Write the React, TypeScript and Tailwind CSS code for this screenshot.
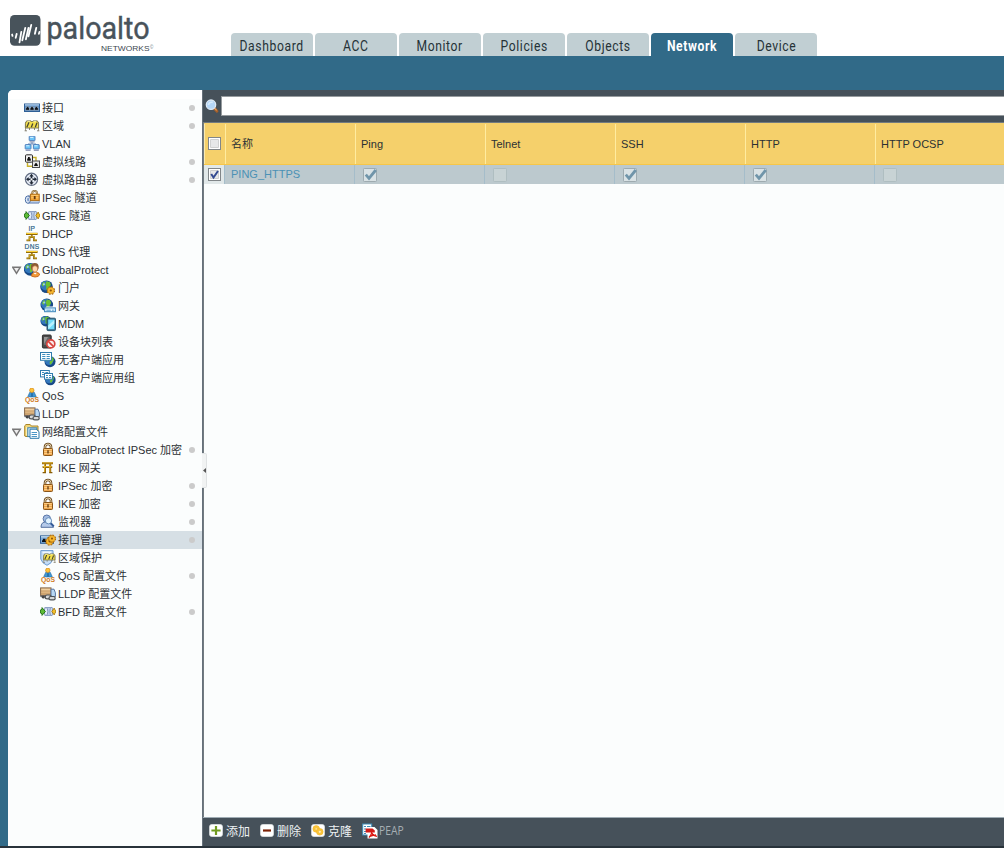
import React from "react";

type IconName =
  | "iface" | "zone" | "vlan" | "vwire" | "router" | "tunnel" | "gre" | "dhcp" | "dns"
  | "gp" | "portal" | "gateway" | "mdm" | "block" | "app" | "appgroup" | "qos" | "lldp"
  | "profiles" | "lock" | "torii" | "monitor" | "mgmt" | "zoneprot";

type Item = { label: string; icon: IconName; dot?: boolean; level?: number; open?: boolean; selected?: boolean };

const items: Item[] = [
  { label: "接口", icon: "iface", dot: true },
  { label: "区域", icon: "zone", dot: true },
  { label: "VLAN", icon: "vlan" },
  { label: "虚拟线路", icon: "vwire", dot: true },
  { label: "虚拟路由器", icon: "router", dot: true },
  { label: "IPSec 隧道", icon: "tunnel" },
  { label: "GRE 隧道", icon: "gre" },
  { label: "DHCP", icon: "dhcp" },
  { label: "DNS 代理", icon: "dns" },
  { label: "GlobalProtect", icon: "gp", open: true },
  { label: "门户", icon: "portal", level: 1 },
  { label: "网关", icon: "gateway", level: 1 },
  { label: "MDM", icon: "mdm", level: 1 },
  { label: "设备块列表", icon: "block", level: 1 },
  { label: "无客户端应用", icon: "app", level: 1 },
  { label: "无客户端应用组", icon: "appgroup", level: 1 },
  { label: "QoS", icon: "qos" },
  { label: "LLDP", icon: "lldp" },
  { label: "网络配置文件", icon: "profiles", open: true },
  { label: "GlobalProtect IPSec 加密", icon: "lock", dot: true, level: 1 },
  { label: "IKE 网关", icon: "torii", level: 1 },
  { label: "IPSec 加密", icon: "lock", dot: true, level: 1 },
  { label: "IKE 加密", icon: "lock", dot: true, level: 1 },
  { label: "监视器", icon: "monitor", dot: true, level: 1 },
  { label: "接口管理", icon: "mgmt", dot: true, level: 1, selected: true },
  { label: "区域保护", icon: "zoneprot", level: 1 },
  { label: "QoS 配置文件", icon: "qos", dot: true, level: 1 },
  { label: "LLDP 配置文件", icon: "lldp", level: 1 },
  { label: "BFD 配置文件", icon: "gre", dot: true, level: 1 },
];

const Globe = ({ cx, cy, r }: { cx: number; cy: number; r: number }) => (
  <g transform={`translate(${cx} ${cy}) scale(${r / 6})`}>
    <circle r="6.4" fill="#174986" />
    <circle cx="-1" cy="-1" r="4.9" fill="#3377bd" />
    <path d="M-5 -2L-3 -5L-1.5 -4L-2 -2L-3.5 0ZM0 -5.6L3.4 -4.8L4.4 -2L2.6 1L1 3.5L-.6 2L0 0L-1.2 -2Z" fill="#6cc132" />
    <circle cx="-2.6" cy="-2.4" r="1.1" fill="#9ccff5" />
  </g>
);

const Gear = ({ cx, cy, s = 1 }: { cx: number; cy: number; s?: number }) => (
  <g transform={`translate(${cx} ${cy}) scale(${s})`}>
    <circle r="4" fill="none" stroke="#a9690c" strokeWidth="2.2" strokeDasharray="1.9 1.24" />
    <circle r="3.9" fill="#f8b930" stroke="#c07d12" strokeWidth=".6" />
    <circle r="1.3" fill="#8e5408" />
  </g>
);

const Padlock = () => (
  <>
    <path d="M5 7V4.8A3 2.8 0 0 1 11 4.8V7" fill="none" stroke="#6d4c22" strokeWidth="2.6" />
    <path d="M5 7V4.8A3 2.8 0 0 1 11 4.8V7" fill="none" stroke="#ead9b4" strokeWidth="1" />
    <rect x="3.5" y="6.5" width="9" height="7" rx=".8" fill="#eda349" stroke="#8a5517" />
    <path d="M4.2 7.6H11.8M4.2 9.6H11.8M4.2 11.6H11.8" stroke="#ffd591" strokeWidth=".9" />
    <path d="M8 8.3V11.4" stroke="#5f360a" strokeWidth="1.3" />
  </>
);

const Barrier = () => (
  <>
    <path d="M1.5 4V13M14.5 4V13" stroke="#a09c8c" />
    <path d="M5.5 10V12M10.5 10V12M.6 12.8H3M13 12.8H15.4" stroke="#8b8778" />
    <path d="M2.6 2.9H7L8 4L9 2.9H13.4L14.6 5.5V10H1.4V5.5Z" fill="#f3df4c" stroke="#77724d" strokeWidth=".9" />
    <path d="M2.8 9.3L5 4.2M7.3 9.3L8.8 5.5M11.3 9.3L13 4.8" stroke="#454433" strokeWidth="1.3" />
    <path d="M3.4 3.6H6M9.6 3.6H12" stroke="#fff7b0" strokeWidth=".8" />
  </>
);

const Monitor = ({ x, y }: { x: number; y: number }) => (
  <g transform={`translate(${x} ${y})`}>
    <rect x=".4" y=".4" width="5.8" height="4.4" rx=".4" fill="#6cc4f7" stroke="#4b78b8" strokeWidth=".9" />
    <path d="M1.4 1.6H4.5" stroke="#dcf5ff" />
    <path d="M.8 6.1H5.8" stroke="#8c95b4" strokeWidth="1.2" />
  </g>
);

const Proxy = () => (
  <>
    <path d="M2 7.9H13.6" stroke="#8f6a08" strokeWidth="2.2" />
    <path d="M2.2 7.5H13.4" stroke="#ffd43a" strokeWidth="1" />
    <path d="M7.8 9V11" stroke="#a97f12" strokeWidth="1.8" />
    <path d="M2.5 14.4H5.5V11.2H10V14.4H13" fill="none" stroke="#83600a" strokeWidth="1.8" />
    <path d="M2.7 14.1H5.3V10.9H10.2V14.1H12.8" fill="none" stroke="#efc533" strokeWidth=".7" />
  </>
);

function icon(name: IconName): React.ReactNode {
  switch (name) {
    case "iface":
      return (
        <>
          <rect x=".5" y="4" width="15" height="7.5" fill="#5d90c6" stroke="#2d5f96" />
          <path d="M1 4.9H15" stroke="#c9e0f4" />
          <path d="M1.6 10.2V8H2.4V6.6H4.8V8H5.6V10.2ZM6 10.2V8H6.8V6.6H9.2V8H10V10.2ZM10.4 10.2V8H11.2V6.6H13.6V8H14.4V10.2Z" fill="#0b1119" stroke="#dce9f5" strokeWidth=".4" />
        </>
      );
    case "zone":
      return <Barrier />;
    case "vlan":
      return (
        <>
          <path d="M8 6V8M4 10V8H12V10" fill="none" stroke="#6a86b5" />
          <Monitor x={4.8} y={-0.2} /><Monitor x={0.8} y={8.2} /><Monitor x={9} y={8.2} />
        </>
      );
    case "vwire":
      return (
        <>
          <path d="M3.5 8.5V12.3H9M9 3.5H12V8" fill="none" stroke="#c9b22c" strokeWidth="1.4" />
          <rect x="1.5" y=".8" width="7" height="7.4" rx="1" fill="#eee" stroke="#2b2b2b" />
          <path d="M3.2 6.8V4.4H4V3H5.8V4.4H6.8V6.8Z" fill="#111" />
          <rect x="8.5" y="7" width="7" height="6.5" fill="#e5e5e5" stroke="#4a4a4a" />
          <path d="M10.2 12V10.4H11V9.2H13V10.4H13.8V12Z" fill="#111" />
        </>
      );
    case "router":
      return (
        <>
          <circle cx="7.5" cy="7.3" r="6.1" fill="#e6ecf6" stroke="#626d82" strokeWidth="1.2" />
          <path d="M7.5 1.8L9.7 4.4H8.3V6.5H10.4V5.1L13 7.3L10.4 9.5V8.1H8.3V10.2H9.7L7.5 12.8L5.3 10.2H6.7V8.1H4.6V9.5L2 7.3L4.6 5.1V6.5H6.7V4.4H5.3Z" fill="#202936" />
          <circle cx="7.5" cy="7.3" r="1.1" fill="#fff" />
        </>
      );
    case "tunnel":
      return (
        <>
          <path d="M4 6H15V13H4Z" fill="#8fb2e2" stroke="#5673a5" />
          <path d="M5 11.8H15" stroke="#d7e5f7" />
          <ellipse cx="3.9" cy="9.6" rx="2.6" ry="3.7" fill="#e3edf9" stroke="#4c70a7" />
          <ellipse cx="4.1" cy="9.6" rx="1" ry="2" fill="#7d9bc8" />
          <path d="M8.2 4.6V3.3A2.4 2.4 0 0 1 13 3.3V4.6" fill="none" stroke="#84632f" strokeWidth="2" />
          <path d="M8.2 4.6V3.3A2.4 2.4 0 0 1 13 3.3V4.6" fill="none" stroke="#ead9b4" strokeWidth=".7" />
          <rect x="6.4" y="4.2" width="8.8" height="6.4" fill="#f2a335" stroke="#b06f19" />
          <path d="M7.2 5.6H14.4M7.2 7.8H14.4" stroke="#ffd57f" strokeWidth=".8" />
          <path d="M10.7 6V9.2" stroke="#653a0d" strokeWidth="1.8" />
        </>
      );
    case "gre":
      return (
        <>
          <rect x="5" y="3.5" width="7" height="8" fill="#b9cbe8" stroke="#7d92bd" strokeWidth=".8" />
          <ellipse cx="6" cy="7.5" rx="1.8" ry="4" fill="#e3ecf9" stroke="#7186b2" strokeWidth=".8" />
          <ellipse cx="11.4" cy="7.5" rx="1.5" ry="4" fill="#cddcf0" stroke="#7185ad" strokeWidth=".7" />
          <path d="M.4 6L2 5.2V3.6L5.4 7.5L2 11.4V9.8L.4 9Z" fill="#5dbb36" stroke="#1d6c15" strokeWidth=".9" />
          <path d="M15.7 6.2L14.3 5.4V4L11.8 7.5L14.3 11V9.6L15.7 8.8Z" fill="#f2c02a" stroke="#9f7209" strokeWidth=".8" />
        </>
      );
    case "dhcp":
      return <><text x="4.4" y="5" fontSize="6.6" fill="#2b6287" stroke="#2b6287" strokeWidth=".2" fontFamily="Liberation Sans" textLength="6.5">IP</text><Proxy /></>;
    case "dns":
      return <><text x=".6" y="5" fontSize="6.6" fill="#2b6287" stroke="#2b6287" strokeWidth=".2" fontFamily="Liberation Sans" textLength="14.6">DNS</text><Proxy /></>;
    case "gp":
      return (
        <>
          <Globe cx={6.3} cy={7.3} r={6} />
          <path d="M7.6 14.2Q7.4 10.3 11.5 10.3T15.7 12.8Q14.5 15 11 15Z" fill="#f29a37" stroke="#c46317" strokeWidth=".9" />
          <circle cx="10.8" cy="5" r="3.9" fill="#8b5a34" />
          <ellipse cx="11" cy="6.9" rx="2.7" ry="3.1" fill="#ffd7ac" stroke="#b46b35" strokeWidth=".6" />
          <path d="M9.2 10.8L11.2 12.6L13 10.8" fill="#fff" />
        </>
      );
    case "portal":
      return <><Globe cx={6.5} cy={6.7} r={5.9} /><Gear cx={10.8} cy={10.5} s={0.85} /></>;
    case "gateway":
      return (
        <>
          <Globe cx={6.8} cy={6.9} r={5.9} />
          <path d="M4.5 10.5L6.5 8.6H13.5L15.5 10.5V14H4.5Z" fill="#fff" />
          <rect x="4.6" y="9.9" width="10.8" height="3.8" fill="#d9f0ff" stroke="#3a84ba" />
          <path d="M6.4 12.2H10.8M12 12.2H13.8" stroke="#5b9fca" />
        </>
      );
    case "mdm":
      return (
        <>
          <Globe cx={5.8} cy={5.1} r={5} />
          <rect x="7" y="2.2" width="8.5" height="12.4" rx="1" fill="#3b6f8c" stroke="#1a4b66" strokeWidth=".9" />
          <rect x="8.2" y="3.6" width="6.1" height="9.6" fill="#70dcfa" />
          <path d="M8.2 13.2V9.6L14.3 4V7.6Z" fill="#b8f2ff" />
        </>
      );
    case "block":
      return (
        <>
          <rect x="2.4" y="1" width="8.8" height="13" rx="1" fill="#4b4b4b" stroke="#303030" />
          <path d="M4 3H9.6V11H4Z" fill="#686868" />
          <path d="M4 10V3H8Z" fill="#969696" />
          <circle cx="10.8" cy="9.9" r="4" fill="#fbeceb" stroke="#d8453f" strokeWidth="1.7" />
          <path d="M8 7.2L13.6 12.6" stroke="#d8453f" strokeWidth="1.7" />
        </>
      );
    case "app":
      return (
        <>
          <Globe cx={10} cy={9.6} r={5.2} />
          <rect x=".5" y=".5" width="11" height="7.8" fill="#fff" stroke="#2f7cad" />
          <path d="M2.2 2.5H5.4M6.6 2.5H9.8M2.2 4.5H5.4M6.6 4.5H9.8M2.2 6.5H5.4M6.6 6.5H9.8" stroke="#3d8fbf" />
        </>
      );
    case "appgroup":
      return (
        <>
          <Globe cx={10.3} cy={10} r={5} />
          <rect x=".5" y=".5" width="8.8" height="6.4" fill="#fff" stroke="#2f7cad" />
          <path d="M2 2.5H4.3M5.4 2.5H8M2 4.5H4.3M5.4 4.5H8" stroke="#3d8fbf" />
          <rect x="4.5" y="3.5" width="8" height="5.7" fill="#fff" stroke="#2f7cad" />
          <path d="M6 5.5H8M9 5.5H11.2M6 7.5H8M9 7.5H11.2" stroke="#3d8fbf" />
        </>
      );
    case "qos":
      return (
        <>
          <path d="M5.8 4.2H10.2L12.4 9H3.6Z" fill="#3f97d3" stroke="#20659d" strokeWidth=".6" />
          <circle cx="7.8" cy="2.3" r="2.2" fill="#ffc53c" stroke="#d68816" strokeWidth=".7" />
          <path d="M8 5.2V8.6" stroke="#154f87" />
          <text x="1" y="14.4" fontSize="6.9" fontWeight="bold" fill="#d07a22" stroke="#fff" strokeWidth=".6" paintOrder="stroke" fontFamily="Liberation Sans" textLength="14" lengthAdjust="spacingAndGlyphs">QoS</text>
        </>
      );
    case "lldp":
      return (
        <>
          <rect x=".6" y="1.9" width="10.4" height="7.6" fill="#cda471" stroke="#86684a" />
          <path d="M1.2 3.5H10.4" stroke="#f0d0a0" strokeWidth="1.6" />
          <path d="M1.2 6.2H10.4" stroke="#e5bd88" />
          <path d="M.3 10.3H10" stroke="#666b72" strokeWidth="1.6" />
          <path d="M11 3.2H14L15.4 6.8V10.6H11Z" fill="#b9d8f4" stroke="#5775a0" />
          <circle cx="3.3" cy="11.2" r="1.4" fill="#444" />
          <g fill="#d6d7d8" stroke="#4e5256" strokeWidth="1.2">
            <rect x="5.2" y="9" width="6" height="3.8" rx="1.9" /><rect x="9" y="10.5" width="6.2" height="3.4" rx="1.7" />
          </g>
        </>
      );
    case "profiles":
      return (
        <>
          <path d="M.7 12V1.8L2 .5H6.2L7.4 2H14V12.5H2Z" fill="#f0d578" stroke="#ab8526" />
          <path d="M2.6 3V11.5" stroke="#fff2b6" />
          <rect x="3.8" y="3.8" width="9" height="8.8" fill="#dceefb" stroke="#3a83b3" />
          <path d="M6 5.2H12.2L15 7.6V14.3H6Z" fill="#fff" stroke="#2b78ab" />
          <path d="M7.6 8.5H13M7.6 10.5H13M7.6 12.5H13" stroke="#4d98c7" />
        </>
      );
    case "lock":
      return <Padlock />;
    case "torii":
      return (
        <>
          <path d="M2 3.3H13M2.6 7H12.2M5 4V12.5M10.2 4V12.5" stroke="#8b6009" strokeWidth="2" />
          <path d="M2.3 2.9H12.7M3 6.6H11.8M4.7 4V12.2M9.9 4V12.2" stroke="#f1bf31" strokeWidth=".9" />
          <path d="M2.6 12.6H6M9.2 12.6H12.4" stroke="#865b08" strokeWidth="1.4" />
        </>
      );
    case "monitor":
      return (
        <>
          <path d="M1 13.3Q1 7.8 6.3 7.8T13.5 13.3Z" fill="#b5caea" stroke="#54719f" />
          <circle cx="6.8" cy="4.7" r="3.7" fill="#a3bce2" stroke="#5a77a8" />
          <circle cx="8.5" cy="6.8" r="3.1" fill="#e2f3ff" stroke="#628ab9" />
          <path d="M10.7 9.2L13.8 12.4" stroke="#335b99" strokeWidth="2" />
        </>
      );
    case "mgmt":
      return (
        <>
          <rect x=".5" y="3.9" width="13" height="7.4" fill="#7fabd6" stroke="#2d5f96" />
          <path d="M1 4.8H10" stroke="#d5e8f6" />
          <path d="M2 10V8.2H2.9V6.8H5.4V8.2H6.3V10Z" fill="#0b1119" />
          <Gear cx={9.6} cy={9.3} s={0.86} /><Gear cx={12} cy={6.6} s={0.8} />
        </>
      );
    case "zoneprot":
      return (
        <>
          <path d="M.8 .6H13V9Q12 13.3 7 15.3Q2 13.3 .8 9Z" fill="#c5ddf7" stroke="#6d9bd2" />
          <path d="M2.6 2.4H11" stroke="#eff7ff" strokeWidth="1.6" />
          <g transform="translate(2.4 1.4) scale(.86)"><Barrier /></g>
        </>
      );
  }
}

const Icon = ({ name }: { name: IconName }) => (
  <svg className="size-4 shrink-0" viewBox="0 0 16 16">{icon(name)}</svg>
);

function TreeRow({ item }: { item: Item }) {
  return (
    <li className={`flex h-[18px] items-center pr-[7px] ${item.level ? "pl-8" : "pl-1"} ${item.selected ? "bg-[#d6dfe5]" : ""}`}>
      {!item.level && (
        <span className="flex w-3 shrink-0 items-center">
          {item.open && (
            <svg className="h-[9px] w-[10px]" viewBox="0 0 10 9">
              <path d="M.8 1.3H8.2L4.5 7.3Z" fill="#eee" stroke="#777" strokeWidth="1.5" />
            </svg>
          )}
        </span>
      )}
      <Icon name={item.icon} />
      <span className="ml-0.5 whitespace-nowrap leading-[18px]">{item.label}</span>
      {item.dot && <i className="ml-auto size-1.5 shrink-0 rounded-full bg-[#cbcbcb]" />}
    </li>
  );
}

const tabs = ["Dashboard", "ACC", "Monitor", "Policies", "Objects", "Network", "Device"];

function Logo() {
  return (
    <svg className="mt-[10px] ml-[10px] h-[46px] w-[150px] shrink-0" viewBox="10 10 150 46">
      <rect x="10" y="15" width="30.5" height="30.8" rx="4.5" fill="#48535b" />
      <path d="M12.4 34.2L12.8 35.6M17 33.5L16 37.5M21.6 31.5L19.8 42M25.6 27.5L22.6 40M28.8 27.5L26.2 39M31.6 24.5L28.8 36M36.6 27.5L35.2 33.5M39.8 31.5L39.2 33.5" transform="translate(-.3 .3)" fill="none" stroke="#fff" strokeWidth="1.8" strokeLinecap="round" />
      <text x="46.5" y="39" fontSize="32" fontFamily="Roboto, sans-serif" fill="#48535b" stroke="#48535b" strokeWidth=".45" textLength="103" lengthAdjust="spacingAndGlyphs">paloalto</text>
      <text x="101" y="51" fontSize="7.7" fontFamily="Liberation Sans, Arial, sans-serif" fill="#3c474f" textLength="48.5" lengthAdjust="spacingAndGlyphs">NETWORKS</text>
      <text x="150" y="49" fontSize="4.5" fontFamily="Liberation Sans, Arial, sans-serif" fill="#68737a">©</text>
    </svg>
  );
}

function HeaderCheckbox({ checked = false }: { checked?: boolean }) {
  return (
    <svg className="size-[13px]" viewBox="0 0 13 13">
      <rect x=".5" y=".5" width="12" height="12" fill="#fff" stroke="#818689" />
      <path d="M2.5 2.5H10.5V10.5H2.5Z" fill="#e7e8e9" stroke="#d0d1d1" />
      {checked && <path d="M3.2 6L5.5 9.5L10 3" fill="none" stroke="#354b91" strokeWidth="2" />}
    </svg>
  );
}

function CellCheckbox({ checked }: { checked: boolean }) {
  return (
    <svg className="size-[15px]" viewBox="0 0 15 15">
      <rect x="1.5" y="1.5" width="13" height="13" rx=".8" fill={checked ? "#d9e2e5" : "#c8d3d5"} stroke={checked ? "#9eabb0" : "#afbec1"} />
      {checked && <path d="M3.8 7.6L7 11.3L13.8 3" fill="none" stroke="#7095aa" strokeWidth="2.8" />}
    </svg>
  );
}

const columns = [
  { label: "名称", checked: null },
  { label: "Ping", checked: true },
  { label: "Telnet", checked: false },
  { label: "SSH", checked: true },
  { label: "HTTP", checked: true },
  { label: "HTTP OCSP", checked: false },
];

function Table() {
  return (
    <div className="overflow-hidden">
      <div className="flex h-[42px] border-b border-[#f7c647] bg-[#f5d06b] pt-px">
        <div className="flex w-[21px] shrink-0 items-center border-l border-[#faeaaf] pb-px pl-[3px]"><HeaderCheckbox /></div>
        {columns.map((col) => (
          <div key={col.label} className="flex w-[130px] shrink-0 items-center border-l border-[#ffec9f] pl-[5px]">{col.label}</div>
        ))}
      </div>
      <div className="flex h-[19px] bg-[#bcc9ce]">
        <div className="flex w-5 shrink-0 items-center bg-[#e1e8e9] pl-1"><HeaderCheckbox checked /></div>
        {columns.map((col) => (
          <div key={col.label} className="flex w-[130px] shrink-0 items-center border-l border-[#a5bdca] pl-[6px] text-[#4b91b5]">
            {col.checked === null ? <span>PING_HTTPS</span> : <span className="pl-px"><CellCheckbox checked={col.checked} /></span>}
          </div>
        ))}
      </div>
    </div>
  );
}

function SearchIcon() {
  return (
    <svg className="size-4 shrink-0" viewBox="0 0 16 16">
      <path d="M10.5 10.5L13 13.2" stroke="#a5602a" strokeWidth="2.8" strokeLinecap="round" />
      <path d="M10.6 10.2L12.6 12.4" stroke="#e3a166" strokeWidth="1.2" />
      <circle cx="7" cy="6.7" r="4.7" fill="#b3d6f8" stroke="#dce9f5" strokeWidth="1.3" />
      <path d="M4.4 7Q5.2 3.6 8.8 4.4" fill="none" stroke="#d6ebfd" strokeWidth="1.6" />
    </svg>
  );
}

function FooterIcon({ kind }: { kind: "add" | "remove" | "clone" | "pdf" }) {
  if (kind === "pdf") {
    return (
      <svg className="size-4" viewBox="0 0 16 16">
        <rect x=".7" y="1" width="9" height="11" fill="#fff" stroke="#3f8db8" />
        <path d="M2 3.5H4M5 3.5H8.5M2 6H4M2 8.5H4M2 10.5H4" stroke="#3f8db8" />
        <path d="M5.5 4H12.5L15.5 7V15.5H5.5Z" fill="#fff" />
        <path d="M3.6 5.5H10.5L12.8 7.5V9.6H3.6Z" fill="#d31b17" />
        <path d="M7 14.6Q9.8 11.6 9.8 8.4M9.5 9.4Q11 12.8 15 13.4M7 13.6Q10 12.2 14 11.8" fill="none" stroke="#dc1914" strokeWidth="1.2" />
      </svg>
    );
  }
  return (
    <svg className="h-[13px] w-[14px]" viewBox="0 0 14 13">
      <rect x=".3" y=".3" width="13.4" height="12.4" rx="3" fill="#fff" stroke="#d1d8da" strokeWidth=".6" />
      {kind === "add" && <path d="M7 2V11M2.4 6.5H11.6" stroke="#719b20" strokeWidth="2.2" />}
      {kind === "remove" && <path d="M3 6.5H11" stroke="#7d2206" strokeWidth="2.2" />}
      {kind === "clone" && (
        <g fill="#fac63a" stroke="#f4b428" strokeWidth=".6">
          <circle cx="5.2" cy="4.9" r="3.3" /><circle cx="8.8" cy="7.8" r="3.3" />
          <circle cx="5.2" cy="4.9" r="1.3" fill="#ffe794" /><circle cx="8.8" cy="7.8" r="1.5" fill="#fff0b8" />
        </g>
      )}
    </svg>
  );
}

function FooterButton({ kind, label }: { kind: "add" | "remove" | "clone"; label: string }) {
  return (
    <button className="flex w-[51px] items-center gap-[3px]">
      <FooterIcon kind={kind} />
      <span className="pt-0.5">{label}</span>
    </button>
  );
}

export default function App() {
  return (
    <div className="flex h-[848px] w-[1004px] flex-col overflow-hidden border-b-2 border-[#28323a] bg-[#316a88] font-['Liberation_Sans','Noto_Sans_CJK_SC',sans-serif] text-[11px] text-[#2b3034]">
      <header className="flex h-14 shrink-0 bg-white">
        <Logo />
        <nav className="ml-[71px] flex items-end gap-0.5">
          {tabs.map((tab) => (
            <button key={tab} className={`flex h-[23px] w-[82px] items-center justify-center rounded-t-[4px] pt-[3px] font-['Roboto',sans-serif] text-[15px] ${tab === "Network" ? "bg-[#316a88] font-bold text-white" : "bg-[#c1cfd3] text-[#253237]"}`}>
              <span className="inline-block scale-x-[.81] tracking-[.75px]">{tab}</span>
            </button>
          ))}
        </nav>
      </header>
      <main className="mt-[34px] ml-2 flex min-h-0 flex-1">
        <aside className="w-[194px] shrink-0 rounded-tl-[5px] bg-[#fbfdfd]">
          <div className="h-[9px] rounded-tl-[5px] bg-white" />
          <ul>{items.map((item) => <TreeRow key={item.label} item={item} />)}</ul>
        </aside>
        <section className="relative flex min-w-0 flex-1 flex-col border-l border-[#66717b] bg-[#46515a]">
          <div className="flex h-8 shrink-0 items-center pl-px">
            <SearchIcon />
            <input aria-label="Search" className="ml-px h-5 flex-1 border border-r-0 border-[#969b9e] bg-white outline-none" />
          </div>
          <div className="min-h-0 flex-1 border-t border-l border-[#727b80] bg-[#fbfdfd]"><Table /></div>
          <footer className="flex h-[29px] shrink-0 items-center border-t border-[#a0adb5] pb-[3px] pl-[6px] text-xs text-[#edf1f3]">
            <FooterButton kind="add" label="添加" />
            <FooterButton kind="remove" label="删除" />
            <FooterButton kind="clone" label="克隆" />
            <button className="flex items-center text-[#a7afb3]"><FooterIcon kind="pdf" /><span className="ml-px inline-block origin-left scale-x-[.86] font-['Open_Sans',sans-serif] text-xs">PEAP</span></button>
          </footer>
          <div className="absolute top-[363px] -left-px flex h-[35px] w-[5px] items-center justify-center rounded-r-[2px] border border-l-0 border-[#dfe2e3] bg-[#f1f3f3]">
            <svg className="h-[5px] w-[3px]" viewBox="0 0 3 5"><path d="M3 0V5L0 2.5Z" fill="#555" /></svg>
          </div>
        </section>
      </main>
    </div>
  );
}
